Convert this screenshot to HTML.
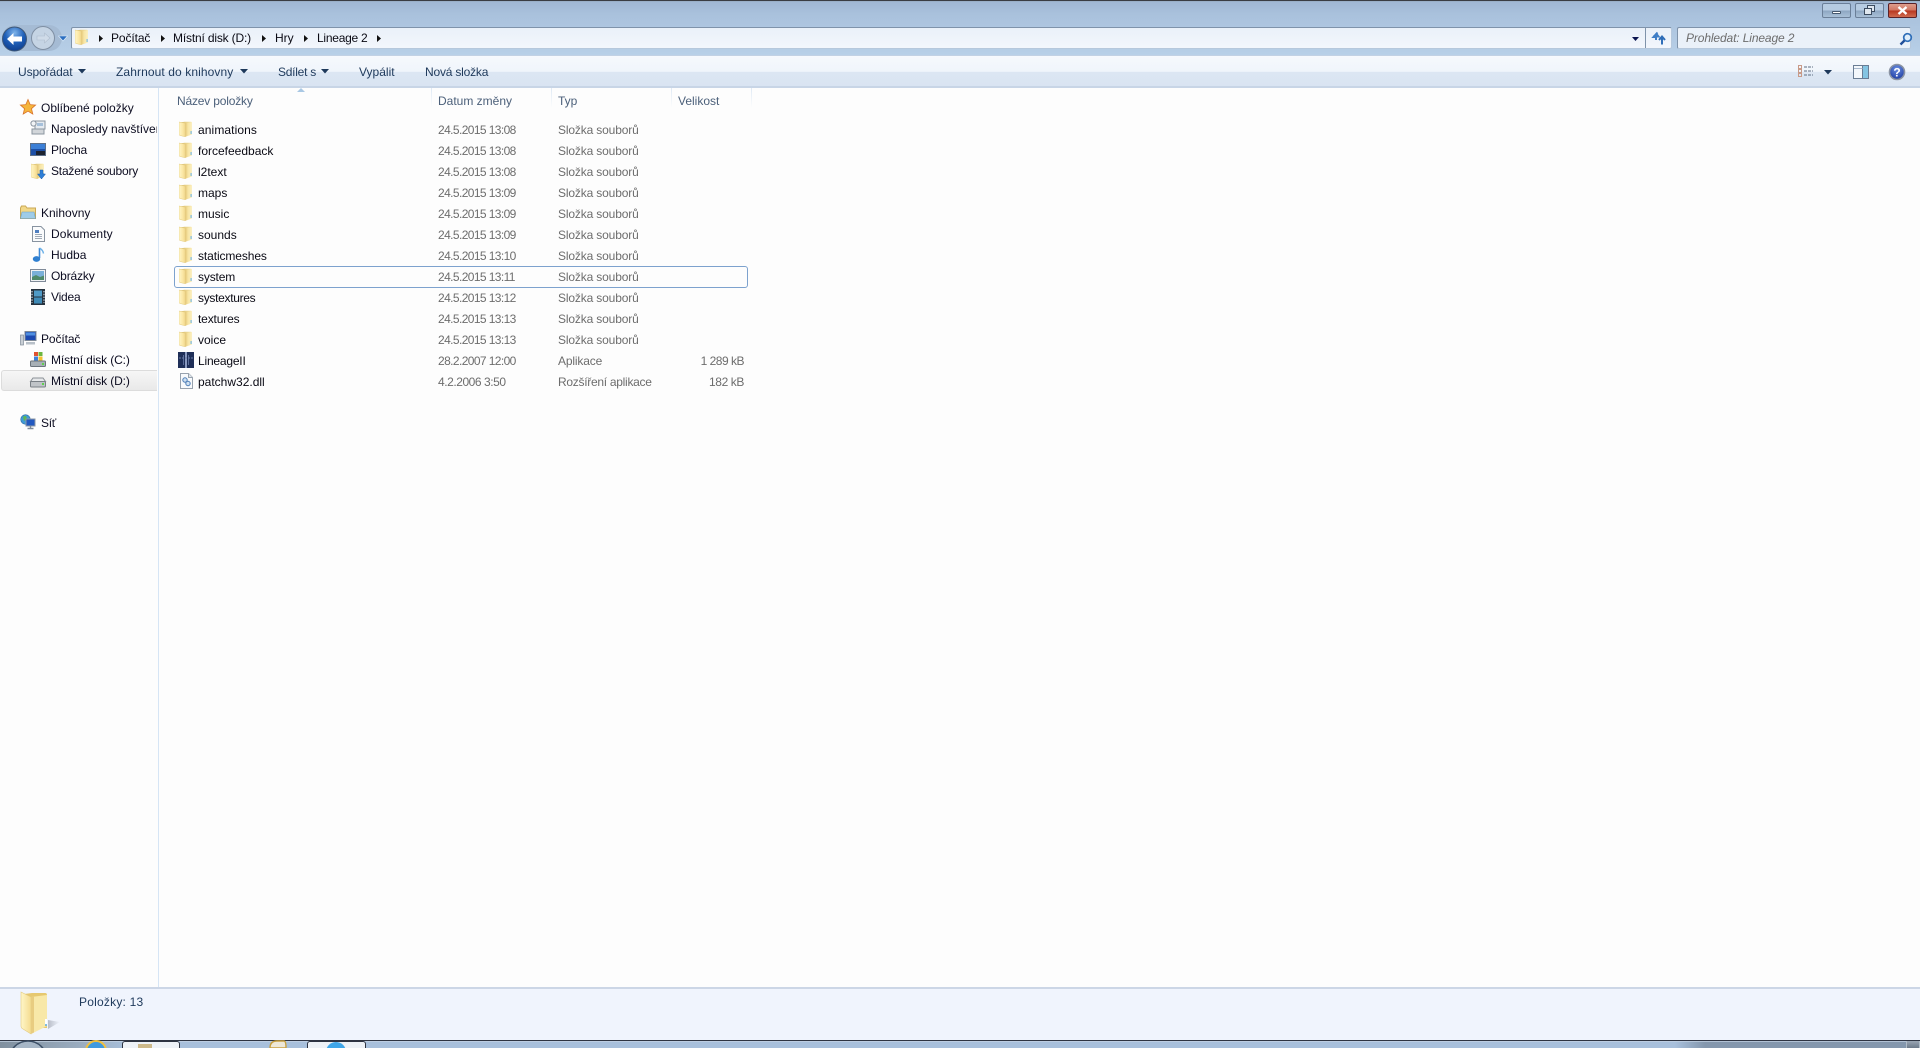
<!DOCTYPE html>
<html lang="cs"><head><meta charset="utf-8"><title>Lineage 2</title>
<style>
html,body{margin:0;padding:0;width:1920px;height:1048px;overflow:hidden;background:#fdfdfd}
body{position:relative;font:12px/16px "Liberation Sans",sans-serif;color:#000}
.a{position:absolute}
.t{position:absolute;white-space:nowrap;line-height:16px}
.tb{color:#1e395b}
.h{color:#4c607a}
.d{color:#6d6d6d}
.dt{letter-spacing:-.6px}
.ty{letter-spacing:-.15px}
.n{color:#0a0a14}
.s{color:#0c0c20}
svg{position:absolute;overflow:visible}
.sep{position:absolute;top:88px;width:1px;height:20px;background:linear-gradient(#dfe9f5,#fdfdfd)}
</style></head><body>
<svg width="0" height="0" style="position:absolute">
<defs>
<linearGradient id="fg" x1="0" x2="1" y1="0" y2="0"><stop offset="0" stop-color="#fff6c8"/><stop offset=".6" stop-color="#fbe7a4"/><stop offset="1" stop-color="#eed48a"/></linearGradient>
<linearGradient id="fb" x1="0" x2="1" y1="0" y2="0"><stop offset="0" stop-color="#d8b964"/><stop offset="1" stop-color="#f8e9ae"/></linearGradient>
<linearGradient id="fr" x1="0" x2="1" y1="0" y2="0"><stop offset="0" stop-color="#e6c878"/><stop offset=".4" stop-color="#f7e5a4"/><stop offset="1" stop-color="#fbefc0"/></linearGradient>
<symbol id="folder" viewBox="0 0 13 16">
<path d="M1 1.5 L5.5 0.8 H12 Q12.8 .8 12.8 1.6 V13.5 L6 14 Z" fill="url(#fb)"/>
<path d="M0 1 L6.4 2.2 V15.8 L1 14.5 Q0 14.2 0 13.4Z" fill="url(#fg)" stroke="#e2ca80" stroke-width=".5"/>
<path d="M6.4 2.2 L12.8 1.2 V13.6 L6.4 15.8Z" fill="url(#fr)"/>
<rect x="11.5" y="10" width="1.2" height="3" fill="#7dbce6"/>
</symbol>
</defs></svg>

<!-- Title / nav bar -->
<div class="a" style="left:0;top:0;width:1920px;height:56px;background:linear-gradient(#9fb6d2,#a9c1dc 25%,#b8d0e8)"></div>
<div class="a" style="left:0;top:0;width:1920px;height:1px;background:#3a3d42"></div>
<div class="a" style="left:0;top:1px;width:1920px;height:1px;background:#9ab0c8"></div>

<!-- window buttons -->
<div class="a" style="left:1822px;top:3px;width:29px;height:15px;box-sizing:border-box;border:1px solid #6b7f98;border-radius:2px;background:linear-gradient(#b6cbe1,#b6cbe1 48%,#8da6c2 52%,#a9c0d8)"></div>
<div class="a" style="left:1832px;top:11px;width:9px;height:3px;background:#fff;border:1px solid #46586e;box-sizing:border-box;border-radius:1px"></div>
<div class="a" style="left:1855px;top:3px;width:29px;height:15px;box-sizing:border-box;border:1px solid #6b7f98;border-radius:2px;background:linear-gradient(#b6cbe1,#b6cbe1 48%,#8da6c2 52%,#a9c0d8)"></div>
<svg style="left:1863px;top:5px" width="13" height="11"><rect x="4.5" y=".5" width="7" height="6" fill="#dfe7ef" stroke="#3c4c60"/><rect x="1.5" y="3.5" width="7" height="6" fill="#dfe7ef" stroke="#3c4c60"/></svg>
<div class="a" style="left:1888px;top:3px;width:29px;height:15px;box-sizing:border-box;border:1px solid #5a2228;border-radius:2px;background:linear-gradient(#dd9d8c,#d07561 48%,#b8361f 52%,#cf6a4f)"></div>
<svg style="left:1897px;top:6px" width="11" height="9"><path d="M1.5 1 L9.5 8 M9.5 1 L1.5 8" stroke="#fff" stroke-width="2.4"/></svg>

<!-- back / forward -->
<div class="a" style="left:2px;top:25px;width:60px;height:26px;border-radius:13px;background:#a5bbd4"></div>
<svg style="left:2px;top:26px" width="26" height="26"><defs><radialGradient id="bk" cx=".5" cy=".25" r=".8"><stop offset="0" stop-color="#7fb4ea"/><stop offset=".5" stop-color="#1f5fb8"/><stop offset="1" stop-color="#0c3a88"/></radialGradient></defs><circle cx="12.5" cy="13" r="12" fill="url(#bk)" stroke="#3f5878"/><path d="M5 13 L11.5 7 V10.5 H20 V15.5 H11.5 V19Z" fill="#fff"/></svg>
<svg style="left:31px;top:26px" width="24" height="24"><circle cx="12" cy="12" r="11.5" fill="#c5d4e4" stroke="#7f8fa3" stroke-width="1"/><path d="M19 12 L13.5 7 V10 H6 V14 H13.5 V17Z" fill="#cfdbe8" stroke="#aebccd" stroke-width=".6"/></svg>
<svg style="left:58px;top:35px" width="10" height="7"><path d="M.5 1 H9.5 L5 6Z" fill="#2c6fc0" stroke="#e0eefb" stroke-width=".6"/></svg>

<!-- address bar -->
<div class="a" style="left:71px;top:27px;width:1601px;height:22px;box-sizing:border-box;border:1px solid #7f93aa;border-radius:2px;background:linear-gradient(#eaf1f9,#f2f6fc);border-right-color:#b6c8dc;border-bottom-color:#b6c8dc"></div>
<svg style="left:75px;top:29px;width:13px;height:16px" viewBox="0 0 13 16"><use href="#folder"/></svg>
<svg style="left:98px;top:34px" width="6" height="9"><path d="M1 1 L5 4.5 L1 8Z" fill="#111"/></svg>
<div class="t n" style="left:111px;top:30px;letter-spacing:-.1px">Počítač</div>
<svg style="left:160px;top:34px" width="6" height="9"><path d="M1 1 L5 4.5 L1 8Z" fill="#111"/></svg>
<div class="t n" style="left:173px;top:30px;letter-spacing:-.17px">Místní disk (D:)</div>
<svg style="left:261px;top:34px" width="6" height="9"><path d="M1 1 L5 4.5 L1 8Z" fill="#111"/></svg>
<div class="t n" style="left:275px;top:30px">Hry</div>
<svg style="left:303px;top:34px" width="6" height="9"><path d="M1 1 L5 4.5 L1 8Z" fill="#111"/></svg>
<div class="t n" style="left:317px;top:30px;letter-spacing:-.25px">Lineage 2</div>
<svg style="left:376px;top:34px" width="6" height="9"><path d="M1 1 L5 4.5 L1 8Z" fill="#111"/></svg>
<svg style="left:1631px;top:36px" width="9" height="6"><path d="M1 1 H8 L4.5 5Z" fill="#0a1450"/></svg>
<div class="a" style="left:1645px;top:28px;width:1px;height:20px;background:#7f93aa"></div>
<svg style="left:1651px;top:31px" width="15" height="15"><path d="M6.5 1.5 L2.5 6 L5 6 L5 9 M2 5.5 H7.5 L4.8 2" fill="none" stroke="#3f7ec6" stroke-width="2"/><path d="M11 13.5 V7 M8 9 L11 5.5 L14 9" fill="none" stroke="#2f6eb8" stroke-width="2"/></svg>

<!-- search -->
<div class="a" style="left:1677px;top:27px;width:234px;height:22px;box-sizing:border-box;border:1px solid #7f93aa;border-radius:2px;background:#eaf1f9;border-right-color:#b6c8dc;border-bottom-color:#b6c8dc"></div>
<div class="t" style="left:1686px;top:30px;color:#6d6d6d;font-style:italic;letter-spacing:-.12px">Prohledat: Lineage 2</div>
<svg style="left:1899px;top:32px" width="14" height="14"><circle cx="8.5" cy="5.5" r="3.8" fill="#dfeefb" stroke="#2f6eb8" stroke-width="1.7"/><path d="M5.5 8.5 L1.5 12.5" stroke="#1f4f9a" stroke-width="2.4"/></svg>

<!-- toolbar -->
<div class="a" style="left:0;top:55px;width:1920px;height:1px;background:#c2d1e4"></div>
<div class="a" style="left:0;top:56px;width:1920px;height:31px;background:linear-gradient(#f6f9fd,#f0f5fb 50%,#dce6f3 52%,#d9e4f2)"></div>
<div class="a" style="left:0;top:86px;width:1920px;height:2px;background:#c8d5e6"></div>
<div class="t tb" style="left:18px;top:64px;letter-spacing:-.1px">Uspořádat</div>
<svg style="left:78px;top:69px" width="8" height="5"><path d="M0 0 H8 L4 4.5Z" fill="#1e395b"/></svg>
<div class="t tb" style="left:116px;top:64px;letter-spacing:.1px">Zahrnout do knihovny</div>
<svg style="left:240px;top:69px" width="8" height="5"><path d="M0 0 H8 L4 4.5Z" fill="#1e395b"/></svg>
<div class="t tb" style="left:278px;top:64px;letter-spacing:-.25px">Sdílet s</div>
<svg style="left:321px;top:69px" width="8" height="5"><path d="M0 0 H8 L4 4.5Z" fill="#1e395b"/></svg>
<div class="t tb" style="left:359px;top:64px">Vypálit</div>
<div class="t tb" style="left:425px;top:64px;letter-spacing:-.2px">Nová složka</div>
<svg style="left:1798px;top:65px" width="16" height="13"><g fill="none"><rect x=".5" y=".5" width="3" height="3" stroke="#c89a88"/><rect x=".5" y="4.5" width="3" height="3" stroke="#c89a88"/><rect x=".5" y="8.5" width="3" height="3" stroke="#c89a88"/></g><path d="M6 2 H15 M6 6 H15 M6 10 H15" stroke="#5f6e83" stroke-dasharray="3 1"/></svg>
<svg style="left:1824px;top:70px" width="8" height="5"><path d="M0 0 H8 L4 4.5Z" fill="#1e395b"/></svg>
<svg style="left:1853px;top:65px" width="16" height="14"><rect x=".5" y=".5" width="15" height="13" fill="#f3f7fb" stroke="#6a7d94"/><rect x="10" y="1" width="5" height="12" fill="#84c4e2"/><path d="M9.5 1 V13" stroke="#6a7d94"/><path d="M1 3.5 H9.5" stroke="#a8b8cc"/></svg>
<svg style="left:1888px;top:63px" width="18" height="18"><defs><radialGradient id="hp" cx=".5" cy=".3" r=".8"><stop offset="0" stop-color="#6a8ee0"/><stop offset="1" stop-color="#14329a"/></radialGradient></defs><circle cx="9" cy="9" r="7.5" fill="url(#hp)" stroke="#8a93a3" stroke-width="1.6"/><text x="9" y="13.5" text-anchor="middle" font-family="Liberation Sans" font-weight="bold" font-size="12" fill="#fff">?</text></svg>

<!-- sidebar -->
<div class="a" style="left:158px;top:88px;width:1px;height:899px;background:#d6e5f5"></div>
<div class="a" style="left:1px;top:370px;width:156px;height:21px;box-sizing:border-box;border:1px solid #dcdcdc;border-right:0;border-radius:3px 0 0 3px;background:linear-gradient(#f6f6f6,#e9e9e9)"></div>

<svg style="left:20px;top:99px" width="16" height="16"><path d="M8 .5 L10.2 5.6 L15.6 6.1 L11.5 9.7 L12.8 15 L8 12.2 L3.2 15 L4.5 9.7 L.4 6.1 L5.8 5.6Z" fill="#f5b53c" stroke="#d9732a" stroke-width=".8"/></svg>
<div class="t s" style="left:41px;top:100px">Oblíbené položky</div>

<svg style="left:30px;top:120px" width="16" height="16"><rect x="5" y="1" width="10" height="8" fill="#e6ebf0" stroke="#8b95a0"/><rect x="7" y="3" width="6" height="3" fill="#a6c0da"/><rect x="2" y="9" width="12" height="5" fill="#d2d6da" stroke="#8b95a0"/><circle cx="3.5" cy="3.5" r="2.6" fill="#f2f4f6" stroke="#8b95a0"/></svg>
<div class="t s" style="left:51px;top:121px;width:106px;overflow:hidden">Naposledy navštívené</div>

<svg style="left:30px;top:143px" width="16" height="14"><rect x=".5" y=".5" width="15" height="12" fill="#1d4fa6" stroke="#5d6f88"/><rect x="1" y="1" width="14" height="5" fill="#3c7fd6"/><rect x="6" y="8" width="9" height="4" fill="#1c2230"/></svg>
<div class="t s" style="left:51px;top:142px;letter-spacing:-.1px">Plocha</div>

<svg style="left:31px;top:163px;width:13px;height:16px" viewBox="0 0 13 16"><use href="#folder"/></svg>
<svg style="left:37px;top:170px" width="9" height="10"><path d="M3 0 H6 V4 H8.5 L4.5 9 L.5 4 H3Z" fill="#2f7fd6" stroke="#1e5cab" stroke-width=".5"/></svg>
<div class="t s" style="left:51px;top:163px;letter-spacing:-.2px">Stažené soubory</div>

<svg style="left:20px;top:205px" width="16" height="15"><path d="M.5 3 V13.5 H15.5 V3 H7 L5.5 1 H1.5Z" fill="#f2d888" stroke="#c9a855"/><path d="M2 7 H14 L15.5 13.5 H.5Z" fill="#9fcce8" stroke="#6ca0c4" stroke-width=".6"/></svg>
<div class="t s" style="left:41px;top:205px">Knihovny</div>

<svg style="left:32px;top:226px" width="13" height="16"><path d="M.5 .5 H9 L12.5 4 V15.5 H.5Z" fill="#fafbfc" stroke="#8893a0"/><rect x="3" y="4" width="4" height="3" fill="#4f7fc0"/><path d="M3 8.5 H10 M3 10.5 H10 M3 12.5 H10" stroke="#a0aab6"/></svg>
<div class="t s" style="left:51px;top:226px;letter-spacing:.12px">Dokumenty</div>

<svg style="left:32px;top:247px" width="13" height="16"><path d="M7.5 1 V11" stroke="#3f8ad6" stroke-width="1.6"/><path d="M7.5 1 Q11 3 11.5 6.5" fill="none" stroke="#6ab0e8" stroke-width="1.4"/><ellipse cx="4.5" cy="12" rx="3.7" ry="2.9" fill="#2f7fd0"/></svg>
<div class="t s" style="left:51px;top:247px">Hudba</div>

<svg style="left:30px;top:269px" width="16" height="14"><rect x=".5" y=".5" width="15" height="12" fill="#f0f2f4" stroke="#7f8a98"/><rect x="2" y="2" width="12" height="9" fill="#7ab0d8"/><path d="M2 11 L2 8 L6 6 L10 8 L14 6.5 V11Z" fill="#4f8a6a"/></svg>
<div class="t s" style="left:51px;top:268px;letter-spacing:-.15px">Obrázky</div>

<svg style="left:31px;top:289px" width="14" height="16"><rect width="14" height="16" fill="#26323e"/><rect x="3" y="1.5" width="8" height="6" fill="#4f9ac6"/><rect x="3" y="8.5" width="8" height="6" fill="#3f8ab6"/><path d="M1 2 V14 M13 2 V14" stroke="#d0d8e0" stroke-width="1.2" stroke-dasharray="1.4 1.4"/></svg>
<div class="t s" style="left:51px;top:289px;letter-spacing:-.2px">Videa</div>

<svg style="left:20px;top:331px" width="17" height="15"><rect x="5" y=".5" width="11" height="9" fill="#1c49b0" stroke="#7f8a98"/><rect x="6" y="1.5" width="9" height="3" fill="#4f8fe0"/><rect x=".5" y="4" width="3" height="10" fill="#c8ced4" stroke="#7f8a98" stroke-width=".7"/><rect x="6" y="11" width="9" height="2.5" fill="#b8c0c8"/></svg>
<div class="t s" style="left:41px;top:331px;letter-spacing:-.1px">Počítač</div>

<svg style="left:30px;top:351px" width="16" height="16"><rect x=".5" y="10" width="15" height="5.5" rx="1" fill="#a8b0b6" stroke="#6c747c"/><rect x="12" y="12" width="2" height="2" fill="#5fd04f"/><rect x="4" y="1" width="4" height="4" fill="#e0522f"/><rect x="8.5" y="1" width="4" height="4" fill="#6db63f"/><rect x="4" y="5.5" width="4" height="4" fill="#3f7fd6"/><rect x="8.5" y="5.5" width="4" height="4" fill="#f2c02f"/></svg>
<div class="t s" style="left:51px;top:352px;letter-spacing:-.12px">Místní disk (C:)</div>

<svg style="left:30px;top:377px" width="16" height="11"><path d="M3 1 H13 L15.5 4.5 H.5Z" fill="#e6e8ea" stroke="#8a9096"/><rect x=".5" y="4.5" width="15" height="5.5" rx="1" fill="#c0c4c8" stroke="#7a8086"/><rect x="12" y="6" width="2" height="2" fill="#5fd04f"/></svg>
<div class="t s" style="left:51px;top:373px;letter-spacing:-.12px">Místní disk (D:)</div>

<svg style="left:20px;top:414px" width="16" height="16"><circle cx="5.5" cy="5.5" r="4.8" fill="#3f9ad6" stroke="#2f6fa6" stroke-width=".6"/><path d="M3 2.5 L6 2 L7 5 L4 7Z" fill="#5fb84f"/><rect x="6" y="5" width="9" height="7" fill="#2258c0" stroke="#8a96a4"/><path d="M10.5 12 V14 M7.5 14.5 H13.5" stroke="#7f8a98" stroke-width="1.4"/></svg>
<div class="t s" style="left:41px;top:415px;letter-spacing:-.3px">Síť</div>

<!-- column headers -->
<svg style="left:297px;top:88px" width="8" height="5"><path d="M0 4 L4 0 L8 4Z" fill="#a9c8e4"/></svg>
<div class="t h" style="left:177px;top:93px;letter-spacing:-.18px">Název položky</div>
<div class="sep" style="left:431px"></div>
<div class="t h" style="left:438px;top:93px">Datum změny</div>
<div class="sep" style="left:551px"></div>
<div class="t h" style="left:558px;top:93px">Typ</div>
<div class="sep" style="left:671px"></div>
<div class="t h" style="left:678px;top:93px">Velikost</div>
<div class="sep" style="left:751px"></div>

<!-- focus -->
<div class="a" style="left:174px;top:266px;width:574px;height:22px;box-sizing:border-box;border:1px solid #7da2ce;border-radius:3px"></div>

<!-- rows -->
<svg style="left:179px;top:121px;width:13px;height:16px" viewBox="0 0 13 16"><use href="#folder"/></svg>
<div class="t n" style="left:198px;top:122px;letter-spacing:.1px">animations</div><div class="t d dt" style="left:438px;top:122px">24.5.2015 13:08</div><div class="t d ty" style="left:558px;top:122px">Složka souborů</div>

<svg style="left:179px;top:142px;width:13px;height:16px" viewBox="0 0 13 16"><use href="#folder"/></svg>
<div class="t n" style="left:198px;top:143px">forcefeedback</div><div class="t d dt" style="left:438px;top:143px">24.5.2015 13:08</div><div class="t d ty" style="left:558px;top:143px">Složka souborů</div>

<svg style="left:179px;top:163px;width:13px;height:16px" viewBox="0 0 13 16"><use href="#folder"/></svg>
<div class="t n" style="left:198px;top:164px">l2text</div><div class="t d dt" style="left:438px;top:164px">24.5.2015 13:08</div><div class="t d ty" style="left:558px;top:164px">Složka souborů</div>

<svg style="left:179px;top:184px;width:13px;height:16px" viewBox="0 0 13 16"><use href="#folder"/></svg>
<div class="t n" style="left:198px;top:185px">maps</div><div class="t d dt" style="left:438px;top:185px">24.5.2015 13:09</div><div class="t d ty" style="left:558px;top:185px">Složka souborů</div>

<svg style="left:179px;top:205px;width:13px;height:16px" viewBox="0 0 13 16"><use href="#folder"/></svg>
<div class="t n" style="left:198px;top:206px">music</div><div class="t d dt" style="left:438px;top:206px">24.5.2015 13:09</div><div class="t d ty" style="left:558px;top:206px">Složka souborů</div>

<svg style="left:179px;top:226px;width:13px;height:16px" viewBox="0 0 13 16"><use href="#folder"/></svg>
<div class="t n" style="left:198px;top:227px">sounds</div><div class="t d dt" style="left:438px;top:227px">24.5.2015 13:09</div><div class="t d ty" style="left:558px;top:227px">Složka souborů</div>

<svg style="left:179px;top:247px;width:13px;height:16px" viewBox="0 0 13 16"><use href="#folder"/></svg>
<div class="t n" style="left:198px;top:248px;letter-spacing:-.1px">staticmeshes</div><div class="t d dt" style="left:438px;top:248px">24.5.2015 13:10</div><div class="t d ty" style="left:558px;top:248px">Složka souborů</div>

<svg style="left:179px;top:268px;width:13px;height:16px" viewBox="0 0 13 16"><use href="#folder"/></svg>
<div class="t n" style="left:198px;top:269px;letter-spacing:-.15px">system</div><div class="t d dt" style="left:438px;top:269px">24.5.2015 13:11</div><div class="t d ty" style="left:558px;top:269px">Složka souborů</div>

<svg style="left:179px;top:289px;width:13px;height:16px" viewBox="0 0 13 16"><use href="#folder"/></svg>
<div class="t n" style="left:198px;top:290px;letter-spacing:-.3px">systextures</div><div class="t d dt" style="left:438px;top:290px">24.5.2015 13:12</div><div class="t d ty" style="left:558px;top:290px">Složka souborů</div>

<svg style="left:179px;top:310px;width:13px;height:16px" viewBox="0 0 13 16"><use href="#folder"/></svg>
<div class="t n" style="left:198px;top:311px;letter-spacing:-.15px">textures</div><div class="t d dt" style="left:438px;top:311px">24.5.2015 13:13</div><div class="t d ty" style="left:558px;top:311px">Složka souborů</div>

<svg style="left:179px;top:331px;width:13px;height:16px" viewBox="0 0 13 16"><use href="#folder"/></svg>
<div class="t n" style="left:198px;top:332px">voice</div><div class="t d dt" style="left:438px;top:332px">24.5.2015 13:13</div><div class="t d ty" style="left:558px;top:332px">Složka souborů</div>

<svg style="left:178px;top:352px" width="16" height="16"><rect width="16" height="16" fill="#1f2f58"/><rect x="7" y="0" width="2" height="16" fill="#8a9ac0"/><rect x="5" y="3" width="1" height="10" fill="#5a6c98"/><rect x="10" y="3" width="1" height="10" fill="#5a6c98"/><path d="M1 6 H15" stroke="#6a7ca6" stroke-dasharray="2 1"/></svg>
<div class="t n" style="left:198px;top:353px;letter-spacing:-.2px">LineageII</div><div class="t d dt" style="left:438px;top:353px">28.2.2007 12:00</div><div class="t d ty" style="left:558px;top:353px">Aplikace</div><div class="t d" style="right:1176px;top:353px;letter-spacing:-.5px">1 289 kB</div>

<svg style="left:180px;top:373px" width="13" height="16"><path d="M.5 .5 H8.5 L12.5 4.5 V15.5 H.5Z" fill="#f8fafc" stroke="#98a2ae"/><path d="M8.5 .5 V4.5 H12.5" fill="#e0e6ec" stroke="#98a2ae"/><circle cx="5" cy="7" r="2.2" fill="#cfe0f0" stroke="#4f7fb8"/><circle cx="8" cy="10.5" r="2.2" fill="#cfe0f0" stroke="#4f7fb8"/></svg>
<div class="t n" style="left:198px;top:374px">patchw32.dll</div><div class="t d" style="left:438px;top:374px;letter-spacing:-.45px">4.2.2006 3:50</div><div class="t d" style="left:558px;top:374px;letter-spacing:-.28px">Rozšíření aplikace</div><div class="t d" style="right:1176px;top:374px;letter-spacing:-.4px">182 kB</div>

<!-- status bar -->
<div class="a" style="left:0;top:987px;width:1920px;height:2px;background:#ccd6e6"></div>
<div class="a" style="left:0;top:989px;width:1920px;height:51px;background:#f0f4fd"></div>
<svg style="left:20px;top:992px" width="40" height="42" viewBox="0 0 40 42"><defs><linearGradient id="big" x1="0" x2="1"><stop offset="0" stop-color="#fff6c8"/><stop offset="1" stop-color="#f4dc90"/></linearGradient><linearGradient id="sh" x1="0" x2="1"><stop offset="0" stop-color="#b8bdc8"/><stop offset="1" stop-color="#f0f4fd"/></linearGradient></defs><path d="M28 37 L40 30 L28 28Z" fill="url(#sh)"/><path d="M4 2 L12 1 H25 Q27 1 27 3 V36 L11 36Z" fill="#e6c870"/><path d="M1 0 L11 5 V42 L3 37 Q1 36 1 34Z" fill="url(#big)" stroke="#e2ca80" stroke-width=".6"/><path d="M11 5 L27 3 V34 L11 42Z" fill="#f8e8a8"/><path d="M11 5 L14 4.6 V40.5 L11 42Z" fill="#e8cc80"/><rect x="25" y="27" width="2" height="6" fill="#fff"/><circle cx="26" cy="33" r="1" fill="#5aa8dd"/></svg>
<div class="t tb" style="left:79px;top:994px;letter-spacing:.22px">Položky: 13</div>

<!-- taskbar -->
<div class="a" style="left:0;top:1040px;width:1920px;height:1px;background:#2e3442"></div>
<div class="a" style="left:0;top:1041px;width:1920px;height:7px;background:linear-gradient(90deg,#80909f,#9aacbf 80px,#a8c0dc 130px,#a8c0dc 1675px,#8497ad 1705px,#8497ad)"></div>
<div class="a" style="left:0;top:1041px;width:1920px;height:1px;background:#c4d3e4;opacity:.7"></div>
<svg style="left:8px;top:1040px;width:40px;height:8px" viewBox="0 0 40 8"><circle cx="20" cy="20" r="19" fill="#a6b6c6" stroke="#3c4f66" stroke-width="1.5"/></svg>
<svg style="left:85px;top:1040px;width:22px;height:8px" viewBox="0 0 22 8"><circle cx="11" cy="11" r="10" fill="#3f9ae0" stroke="#f0c040" stroke-width="2"/></svg>
<div class="a" style="left:122px;top:1041px;width:58px;height:7px;box-sizing:border-box;border:1px solid #2e3442;border-bottom:0;border-radius:3px 3px 0 0;background:#eef2f7"></div>
<div class="a" style="left:138px;top:1044px;width:14px;height:4px;background:#cdb98a"></div>
<svg style="left:268px;top:1040px;width:20px;height:8px" viewBox="0 0 20 8"><path d="M2 8 Q2 1 9 1 H16 Q18 1 18 8Z" fill="#eee8d8" stroke="#c8a040" stroke-width="1.4"/></svg>
<div class="a" style="left:307px;top:1041px;width:59px;height:7px;box-sizing:border-box;border:1px solid #2e3442;border-bottom:0;border-radius:3px 3px 0 0;background:#eef2f7"></div>
<svg style="left:326px;top:1042px;width:20px;height:6px" viewBox="0 0 20 6"><circle cx="10" cy="10" r="10" fill="#3fa6e8"/></svg>
<div class="a" style="left:1906px;top:1041px;width:14px;height:7px;box-sizing:border-box;border-left:1px solid #b0bcc8;border-right:1px solid #b0bcc8;background:linear-gradient(#9aa6b4,#6c7a8a)"></div>
</body></html>
